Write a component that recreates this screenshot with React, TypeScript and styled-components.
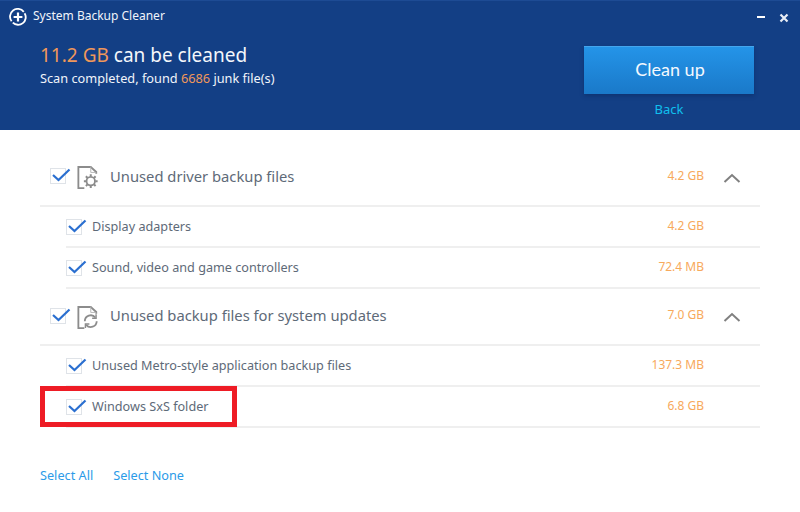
import styled, { createGlobalStyle } from "styled-components";

const GlobalStyle = createGlobalStyle`
  html, body {
    margin: 0;
    padding: 0;
    background: #fff;
  }
  body {
    font-family: "Noto Sans", "Open Sans", "Liberation Sans", sans-serif;
  }
`;

type Item = { label: string; size: string };
type Group = { label: string; size: string; icon: "gear" | "refresh"; items: Item[] };

const groups: Group[] = [
  {
    label: "Unused driver backup files",
    size: "4.2 GB",
    icon: "gear",
    items: [
      { label: "Display adapters", size: "4.2 GB" },
      { label: "Sound, video and game controllers", size: "72.4 MB" },
    ],
  },
  {
    label: "Unused backup files for system updates",
    size: "7.0 GB",
    icon: "refresh",
    items: [
      { label: "Unused Metro-style application backup files", size: "137.3 MB" },
      { label: "Windows SxS folder", size: "6.8 GB" },
    ],
  },
];

function Tick() {
  return (
    <svg width="20" height="16" viewBox="0 0 20 16" fill="none">
      <path d="M2 8 L7.5 13 L18.5 2.5" stroke="#2a6fd0" strokeWidth="2.2" />
    </svg>
  );
}

function FileIcon({ kind }: { kind: "gear" | "refresh" }) {
  return (
    <svg width="22" height="25" viewBox="0 0 24 26" fill="none">
      <path d="M8 24.5 H1.5 V1.5 H15 L21 7 V9" stroke="#8c8c8c" strokeWidth="2" />
      <path d="M15 1 V7.5 H21" stroke="#b5b5b5" strokeWidth="1" />
      {kind === "gear" ? (
        <g stroke="#8c8c8c">
          <circle cx="15" cy="17" r="4.6" strokeWidth="2" />
          <path
            d="M15 9.5 V12 M15 22 V24.5 M7.5 17 H10 M20 17 H22.5 M9.7 11.7 L11.5 13.5 M18.5 20.5 L20.3 22.3 M9.7 22.3 L11.5 20.5 M18.5 13.5 L20.3 11.7"
            strokeWidth="2.2"
          />
        </g>
      ) : (
        <g stroke="#8c8c8c" strokeWidth="2">
          <path d="M8.5 17 A6.5 6.5 0 0 1 20 13" />
          <path d="M21.5 17 A6.5 6.5 0 0 1 10 21" />
          <path d="M20.8 9.5 V13.8 H16.5" strokeWidth="1.6" />
          <path d="M9.2 24.5 V20.2 H13.5" strokeWidth="1.6" />
        </g>
      )}
    </svg>
  );
}

export default function App() {
  return (
    <Window>
      <GlobalStyle />
      <Header>
        <TitleBar>
          <svg width="18" height="18" viewBox="0 0 18 18" fill="none">
            <path d="M2.6 13.2 A7.6 7.6 0 0 1 14.8 3.9" stroke="#fff" strokeWidth="1.8" />
            <path d="M15.6 5.2 A7.6 7.6 0 0 1 3.8 14.6" stroke="#fff" strokeWidth="1.8" />
            <path d="M9 4.6 V13.4 M4.6 9 H13.4" stroke="#fff" strokeWidth="2.2" />
          </svg>
          <AppName>System Backup Cleaner</AppName>
          <WindowButtons>
            <svg width="10" height="10" viewBox="0 0 10 10">
              <path d="M0 5 H8" stroke="#fff" strokeWidth="2" />
            </svg>
            <CloseIcon width="10" height="10" viewBox="0 0 10 10">
              <path d="M1.5 1.5 L8.5 8.5 M8.5 1.5 L1.5 8.5" stroke="#e8edf5" strokeWidth="2.2" />
            </CloseIcon>
          </WindowButtons>
        </TitleBar>
        <Summary>
          <div>
            <Headline>
              <Accent>11.2 GB</Accent> can be cleaned
            </Headline>
            <Detail>
              Scan completed, found <Accent>6686</Accent> junk file(s)
            </Detail>
          </div>
          <Actions>
            <CleanButton>Clean up</CleanButton>
            <BackLink>Back</BackLink>
          </Actions>
        </Summary>
      </Header>
      <Content>
        {groups.map((group) => (
          <section key={group.label}>
            <GroupRow>
              <CheckBox>
                <Tick />
              </CheckBox>
              <GroupIcon>
                <FileIcon kind={group.icon} />
              </GroupIcon>
              <GroupLabel>{group.label}</GroupLabel>
              <Size>{group.size}</Size>
              <Chevron>
                <svg width="18" height="10" viewBox="0 0 18 10" fill="none">
                  <path d="M1.5 9 L9 2 L16.5 9" stroke="#808080" strokeWidth="2" />
                </svg>
              </Chevron>
            </GroupRow>
            {group.items.map((item) => (
              <ItemRow key={item.label}>
                <CheckBox>
                  <Tick />
                </CheckBox>
                <ItemLabel>{item.label}</ItemLabel>
                <Size>{item.size}</Size>
                <Chevron />
              </ItemRow>
            ))}
          </section>
        ))}
        <Footer>
          <FooterLink>Select All</FooterLink>
          <FooterLink>Select None</FooterLink>
        </Footer>
      </Content>
      <Highlight />
    </Window>
  );
}

const Window = styled.div`
  position: relative;
  width: 800px;
  height: 512px;
  overflow: hidden;
  background: #fff;
`;

const Header = styled.header`
  height: 130px;
  box-sizing: border-box;
  background: #133f85;
  border-top: 1px solid #1d4b94;
  color: #fff;
`;

const TitleBar = styled.div`
  display: flex;
  align-items: center;
  height: 31px;
  padding: 0 11px 0 9px;
  gap: 6px;
`;

const AppName = styled.span`
  font-size: 12px;
  margin-bottom: 2px;
  color: #f0f4fa;
`;

const WindowButtons = styled.div`
  display: flex;
  align-items: center;
  gap: 12px;
  margin-left: auto;
`;

const CloseIcon = styled.svg`
  margin-top: 2px;
`;

const Summary = styled.div`
  display: flex;
  justify-content: space-between;
  padding: 14px 46px 0 40px;
`;

const Headline = styled.div`
  font-size: 19px;
  line-height: 24px;
  margin-top: -3px;
  color: #f4f7fb;
`;

const Detail = styled.div`
  font-size: 12.75px;
  line-height: 18px;
  margin-top: 2px;
  color: #f0f4fa;
`;

const Accent = styled.span`
  color: #f0975a;
`;

const Actions = styled.div`
  display: flex;
  flex-direction: column;
  align-items: center;
`;

const CleanButton = styled.div`
  width: 170px;
  height: 48px;
  box-sizing: border-box;
  display: flex;
  align-items: center;
  justify-content: center;
  padding: 0 0 3px 2px;
  background: linear-gradient(#2494e8, #1a79c9);
  border-top: 1px solid #44a6ee;
  font-family: Lato, "Noto Sans", sans-serif;
  font-size: 18px;
  font-weight: 400;
  color: #f4f9fe;
  box-shadow: 0 2px 4px rgba(8, 36, 84, 0.4);
`;

const BackLink = styled.div`
  margin-top: 6px;
  font-size: 13px;
  line-height: 18px;
  color: #10c0ef;
`;

const Content = styled.main`
  padding: 19px 40px 0;
`;

const GroupRow = styled.div`
  display: flex;
  align-items: center;
  height: 58px;
  box-sizing: border-box;
  padding: 0 0 2px 10px;
  border-bottom: 2px solid #efefef;

  section + section & {
    height: 57px;
  }
`;

const ItemRow = styled.div`
  display: flex;
  align-items: center;
  height: 41px;
  box-sizing: border-box;
  margin-left: 26px;
  border-bottom: 2px solid #efefef;
`;

const CheckBox = styled.span`
  position: relative;
  flex: none;
  width: 14px;
  height: 14px;
  border: 1px solid #dfe3e8;
  background: #fff;

  svg {
    position: absolute;
    left: 0;
    top: -2px;
  }
`;

const GroupIcon = styled.span`
  display: flex;
  margin: 3px 0 0 11px;
`;

const GroupLabel = styled.span`
  margin-left: 11px;
  font-size: 14.75px;
  color: #5e6a78;

  section + section & {
    margin-bottom: 2px;
  }
`;

const ItemLabel = styled.span`
  margin: 0 0 2px 10px;
  font-size: 12.65px;
  color: #5e6a78;
`;

const Size = styled.span`
  margin: 0 0 2px auto;
  font-size: 12px;
  color: #f7a95c;
`;

const Chevron = styled.span`
  display: flex;
  justify-content: flex-end;
  flex: none;
  width: 56px;
  padding: 3px 19px 0 0;
  box-sizing: border-box;
`;

const Footer = styled.div`
  display: flex;
  gap: 20px;
  margin-top: 38px;
`;

const FooterLink = styled.a`
  font-size: 12.7px;
  line-height: 18px;
  color: #2b9be8;
`;

const Highlight = styled.div`
  position: absolute;
  left: 40px;
  top: 386px;
  width: 197px;
  height: 41px;
  box-sizing: border-box;
  border: 5px solid #ee1c25;
`;
